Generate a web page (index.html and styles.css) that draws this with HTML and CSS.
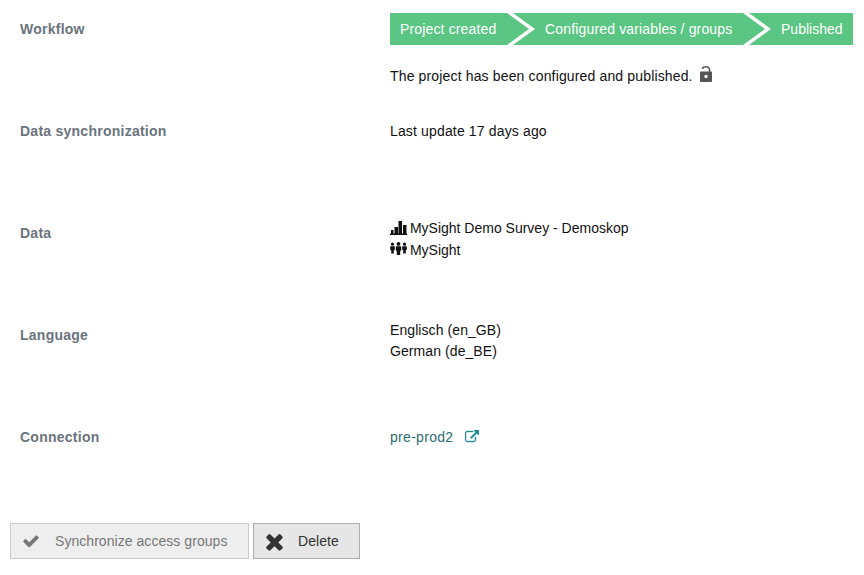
FILE: index.html

```html
<!DOCTYPE html>
<html lang="en">
<head>
    <meta charset="UTF-8">
    <title>Project details</title>
    <link rel="stylesheet" href="styles.css">
</head>
<body>
    <div class="row row-first">
        <div class="label">Workflow</div>
        <div class="value">
            <div class="steps">
                <span>Project created</span>
                <svg class="chevron" viewBox="0 0 28 32"><path d="M0 0H6L28 16 6 32H0L22 16Z" fill="#fff"/></svg>
                <span>Configured variables / groups</span>
                <svg class="chevron" viewBox="0 0 28 32"><path d="M0 0H6L28 16 6 32H0L22 16Z" fill="#fff"/></svg>
                <span class="last-step">Published</span>
            </div>
            <p class="status">The project has been configured and published.
                <svg class="lock" viewBox="0 0 12 16">
                    <path d="M2.500 3C2.500 1.800 3.500 .8 6 .8S9.500 2 9.500 4V6" fill="none" stroke="#555" stroke-width="1.600"/>
                    <path fill-rule="evenodd" d="M1 5.500h10c.6 0 1 .4 1 1V15c0 .6-.4 1-1 1H1c-.6 0-1-.4-1-1V6.500c0-.6.4-1 1-1ZM6 8.800a1.700 1.700 0 1 0 0 3.400 1.700 1.700 0 0 0 0-3.400Z" fill="#555"/>
                </svg>
            </p>
        </div>
    </div>
    <div class="row">
        <div class="label">Data synchronization</div>
        <div class="value">Last update 17 days ago</div>
    </div>
    <div class="row">
        <div class="label">Data</div>
        <div class="value list">
            <div class="data-line">
                <svg class="small-icon bars" viewBox="0 0 17 14"><path d="M0 12.500h17V14H0ZM1 9h2.500v5H1ZM4.500 6H8v8H4.500ZM8.500 0H12v14H8.500ZM13 4h3.500v10H13Z" fill="#111"/></svg>
                MySight Demo Survey - Demoskop
            </div>
            <div class="data-line">
                <svg class="small-icon people" viewBox="0 0 17 13"><path d="M8.500 0a1.900 1.900 0 1 1 0 3.800 1.900 1.900 0 0 1 0-3.800ZM5.800 4.200h5.400v4.500h-1V13H6.800V8.700h-1ZM2.500 .6a1.600 1.600 0 1 1 0 3.200 1.600 1.600 0 0 1 0-3.200ZM.2 4.200h4.600v3.800h-1v3.500H1.200V8h-1ZM14.500 .6a1.600 1.600 0 1 1 0 3.200 1.600 1.600 0 0 1 0-3.200ZM12.200 4.200h4.600v3.800h-1v3.500h-2.600V8h-1Z" fill="#111"/></svg>
                MySight
            </div>
        </div>
    </div>
    <div class="row">
        <div class="label">Language</div>
        <div class="value list">
            <div>Englisch (en_GB)</div>
            <div>German (de_BE)</div>
        </div>
    </div>
    <div class="row">
        <div class="label">Connection</div>
        <div class="value">
            <a class="conn" href="#">pre-prod2
                <svg class="ext" viewBox="0 0 1792 1792"><path d="M1408 928v320q0 119-84.500 203.500t-203.500 84.500h-832q-119 0-203.500-84.500t-84.500-203.500v-832q0-119 84.500-203.500t203.500-84.500h704q14 0 23 9t9 23v64q0 14-9 23t-23 9h-704q-66 0-113 47t-47 113v832q0 66 47 113t113 47h832q66 0 113-47t47-113v-320q0-14 9-23t23-9h64q14 0 23 9t9 23zm384-864v512q0 26-19 45t-45 19-45-19l-176-176-652 652q-10 10-23 10t-23-10l-114-114q-10-10-10-23t10-23l652-652-176-176q-19-19-19-45t19-45 45-19h512q26 0 45 19t19 45z" fill="currentColor" stroke="currentColor" stroke-width="50"/></svg>
            </a>
        </div>
    </div>
    <div class="actions">
        <button class="btn btn-disabled">
            <svg class="btn-icon" viewBox="0 0 1792 1792"><path d="M1671 566q0 40-28 68l-724 724-136 136q-28 28-68 28t-68-28l-136-136-362-362q-28-28-28-68t28-68l136-136q28-28 68-28t68 28l294 295 656-657q28-28 68-28t68 28l136 136q28 28 28 68z" fill="currentColor"/></svg>
            Synchronize access groups
        </button>
        <button class="btn btn-delete">
            <svg class="btn-icon" viewBox="0 0 1792 1792"><path d="M1490 1322q0 40-28 68l-136 136q-28 28-68 28t-68-28l-294-294-294 294q-28 28-68 28t-68-28l-136-136q-28-28-28-68t28-68l294-294-294-294q-28-28-28-68t28-68l136-136q28-28 68-28t68 28l294 294 294-294q28-28 68-28t68 28l136 136q28 28 28 68t-28 68l-294 294 294 294q28 28 28 68z" fill="currentColor"/></svg>
            Delete
        </button>
    </div>
</body>
</html>
```

FILE: styles.css

```css
body {
    margin: 0;
    font-family: "Liberation Sans", Arial, sans-serif;
    font-size: 14px;
    line-height: 20px;
    letter-spacing: .15px;
    color: #111;
    background-color: #fff;
}
.row {
    display: flex;
    height: 102px;
    box-sizing: border-box;
    padding-top: 19px;
}
.row-first {
    padding-top: 0;
}
.row-first .label {
    padding-top: 19px;
}
.label {
    width: 390px;
    padding-left: 20px;
    box-sizing: border-box;
    font-weight: bold;
    letter-spacing: .25px;
    color: #6b747c;
}
.value {
    flex: 1;
}
.row-first .value {
    padding-top: 13px;
}
.list {
    margin-top: -5px;
    line-height: 21px;
    letter-spacing: .08px;
}
.steps {
    display: flex;
    align-items: center;
    width: 463px;
    height: 32px;
    box-sizing: border-box;
    padding-left: 10px;
    gap: 10px;
    background-color: #5bc583;
    color: #fff;
    letter-spacing: .15px;
    white-space: nowrap;
}
.last-step {
    letter-spacing: 0;
}
.chevron {
    width: 28px;
    height: 32px;
    margin-left: .7px;
    flex-shrink: 0;
}
.status {
    margin: 21px 0 0;
}
.lock {
    width: 12px;
    height: 16px;
    margin-left: 3px;
    vertical-align: -1px;
}
.data-line {
    height: 22px;
    letter-spacing: 0;
}
.small-icon {
    width: 17px;
    margin-right: -1px;
}
.bars {
    height: 14px;
    vertical-align: -2px;
}
.people {
    height: 13px;
    vertical-align: 0;
}
.conn {
    color: #2c6e70;
    letter-spacing: .3px;
    text-decoration: none;
}
.ext {
    width: 14px;
    height: 14px;
    margin-left: 7px;
    vertical-align: -2px;
    color: #1f8a94;
}
.actions {
    display: flex;
    gap: 4px;
    padding-left: 10px;
    margin-top: 13px;
}
.btn {
    display: flex;
    align-items: center;
    height: 36px;
    box-sizing: border-box;
    padding: 0 20px 0 11px;
    font-family: inherit;
    font-size: 14px;
    letter-spacing: .05px;
    border: 1px solid #ccc;
    border-radius: 0;
}
.btn-icon {
    width: 18px;
    height: 18px;
    margin-right: 15px;
}
.btn-disabled {
    width: 239px;
    background-color: #eee;
    color: #777;
}
.btn-delete {
    width: 107px;
    padding-left: 8px;
    background-color: #e6e6e6;
    border-color: #adadad;
    color: #333;
}
.btn-delete .btn-icon {
    width: 25px;
    height: 25px;
    margin-right: 11px;
}
```
